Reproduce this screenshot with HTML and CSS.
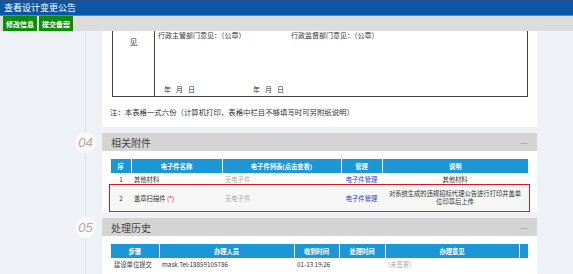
FILE: index.html
```html
<!DOCTYPE html>
<html>
<head>
<meta charset="utf-8">
<title>查看设计变更公告</title>
<link rel="stylesheet" href="styles.css">
</head>
<body>

<!-- en-tete ------------------------------------------------------------->
<div class="titlebar">查看设计变更公告</div>
<div class="toolbar">
	<a class="btn">修改信息</a>
	<a class="btn">提交备案</a>
</div>

<!-- contenu (deja defile) ----------------------------------------------->
<div class="viewport">
<div class="flow">

	<div class="sec">
		<div class="rail"></div>
		<div class="panel p1">
			<table class="form">
				<tr>
					<td class="lab">见</td>
					<td class="opin">
						<div class="opwrap">
							<div class="sign"><span class="w1">行政主管部门意见：（公章）</span><span>行政监督部门意见：（公章）</span></div>
							<div class="date"><span class="d1"><i>年</i><i>月</i><i>日</i></span><span><i>年</i><i>月</i><i>日</i></span></div>
						</div>
					</td>
				</tr>
			</table>
			<div class="note">注：本表格一式六份（计算机打印，表格中栏目不够填写时可另附纸说明）</div>
		</div>
	</div>

	<div class="sec s04">
		<div class="rail"><span class="num">04</span></div>
		<div>
			<div class="head">相关附件<span class="fold">—</span></div>
			<div class="panel p2">
				<table class="grid">
					<colgroup><col style="width:20px"><col style="width:91px"><col style="width:119px"><col style="width:41px"><col></colgroup>
					<tr><th>序</th><th>电子件名称</th><th>电子件列表(点击查看)</th><th>管理</th><th>说明</th></tr>
					<tr class="r1">
						<td class="c">1</td><td>其他材料</td><td class="mute">无电子件</td>
						<td class="c"><a>电子件管理</a></td><td class="c">其他材料</td>
					</tr>
					<tr class="r2">
						<td class="c">2</td><td>盖章扫描件 <span class="req">(*)</span></td><td class="mute">无电子件</td>
						<td class="c"><a>电子件管理</a></td><td class="c desc">对系统生成的违规招标代理公告进行打印并盖单位印章后上传</td>
					</tr>
				</table>
			</div>
		</div>
	</div>

	<div class="sec s05">
		<div class="rail"><span class="num">05</span></div>
		<div>
			<div class="head">处理历史<span class="fold">—</span></div>
			<div class="panel p2">
				<table class="grid">
					<colgroup><col style="width:48px"><col style="width:135px"><col style="width:45px"><col style="width:46px"><col style="width:134px"><col></colgroup>
					<tr><th>步骤</th><th>办理人员</th><th>收到时间</th><th>处理时间</th><th>办理意见</th><th></th></tr>
					<tr class="r1">
						<td>建设单位提交</td><td>mask Tel:18859105786</td><td>01-13 19:26</td><td></td><td class="mute">[未签署]</td><td></td>
					</tr>
				</table>
			</div>
		</div>
	</div>

</div>
</div>

</body>
</html>
```

FILE: styles.css
```css
body {margin:0; height:274px; overflow:hidden; background:#eef2f7;
	font-family:"Noto Sans CJK SC","Liberation Sans",sans-serif; color:#333;}

/* en-tete */
.titlebar {height:14px; line-height:14px; padding-left:4px; font-size:9px; color:#fff;
	background:#0a56a9; border-top:1px solid #27508a; border-bottom:1px solid #4f88c8;}
.toolbar {height:15px; display:flex; gap:2px; padding-left:3px; background:#dcdcdc;}
.btn {display:flex; align-items:center; padding:0 3px; font-size:7px; font-weight:bold;
	color:#fff; background:#0d8b0d;}

/* contenu */
.viewport {height:243px; overflow:hidden;}
.flow {margin-top:-40px;
	background:linear-gradient(to right, transparent 85px, #dce2e9 85px, #dce2e9 86px, transparent 86px);}
.sec {display:grid; grid-template-columns:102px 435px;}
.s04 {margin-top:6px;}
.s05 {margin-top:5px;}

.rail {display:flex; align-items:center; height:18px; padding-left:75px;}
.num {width:21px; height:21px; border-radius:50%; background:#f8f9fa; display:flex;
	align-items:center; justify-content:center; font-family:"Liberation Sans",sans-serif;
	font-style:italic; font-size:13px; color:#b0aa9e;}

.panel {background:#fff;}
.head {height:18px; display:flex; align-items:center; justify-content:space-between;
	padding:0 9px; background:#d4d4d4; font-size:10px; color:#444;}
.fold {color:#999; font-size:9px;}

/* formulaire */
.p1 {padding:0 9px 9px 8px;}
table.form {width:416px; margin-left:2px; border-collapse:collapse; border:1px solid #444;}
td.lab {width:41px; border-right:1px solid #444; vertical-align:top; text-align:center;
	padding:38px 0 0; font-size:8px; line-height:24px;}
td.opin {vertical-align:top; padding:38px 0 2px 3px; font-size:7px; line-height:10px;}
.opwrap {height:64px; display:flex; flex-direction:column; justify-content:space-between;}
.w1 {display:inline-block; width:133px;}
.date {padding-left:6px; display:flex;}
.date span {display:flex; gap:5px;}
.date i {font-style:normal;}
.d1 {width:89px;}
.note {margin-top:9px; font-size:7.4px; line-height:12px; color:#333;}

/* tableaux */
.p2 {padding:8px 9px 3px;}
table.grid {width:100%; border-collapse:collapse; table-layout:fixed; font-size:6.3px;}
.grid th {height:14px; padding:0; background:#1c97d6; color:#fff; font-weight:bold;
	border-left:1px solid #fff;}
.grid th:first-child {border-left:0;}
.grid td {height:12px; padding:0 3px; white-space:nowrap;}
.grid td.c {text-align:center;}
.grid .r1 td {height:13px;}
.grid .r2 {background:#f6f6f6; outline:1px solid #d9141b; outline-offset:1px;}
.grid .r2 td {height:24px;}
.grid td.desc {white-space:normal; padding:0 4px; line-height:8.5px;}
.mute {color:#aaa;}
.req {color:#e00;}
a {color:#2b3fc9;}
```
